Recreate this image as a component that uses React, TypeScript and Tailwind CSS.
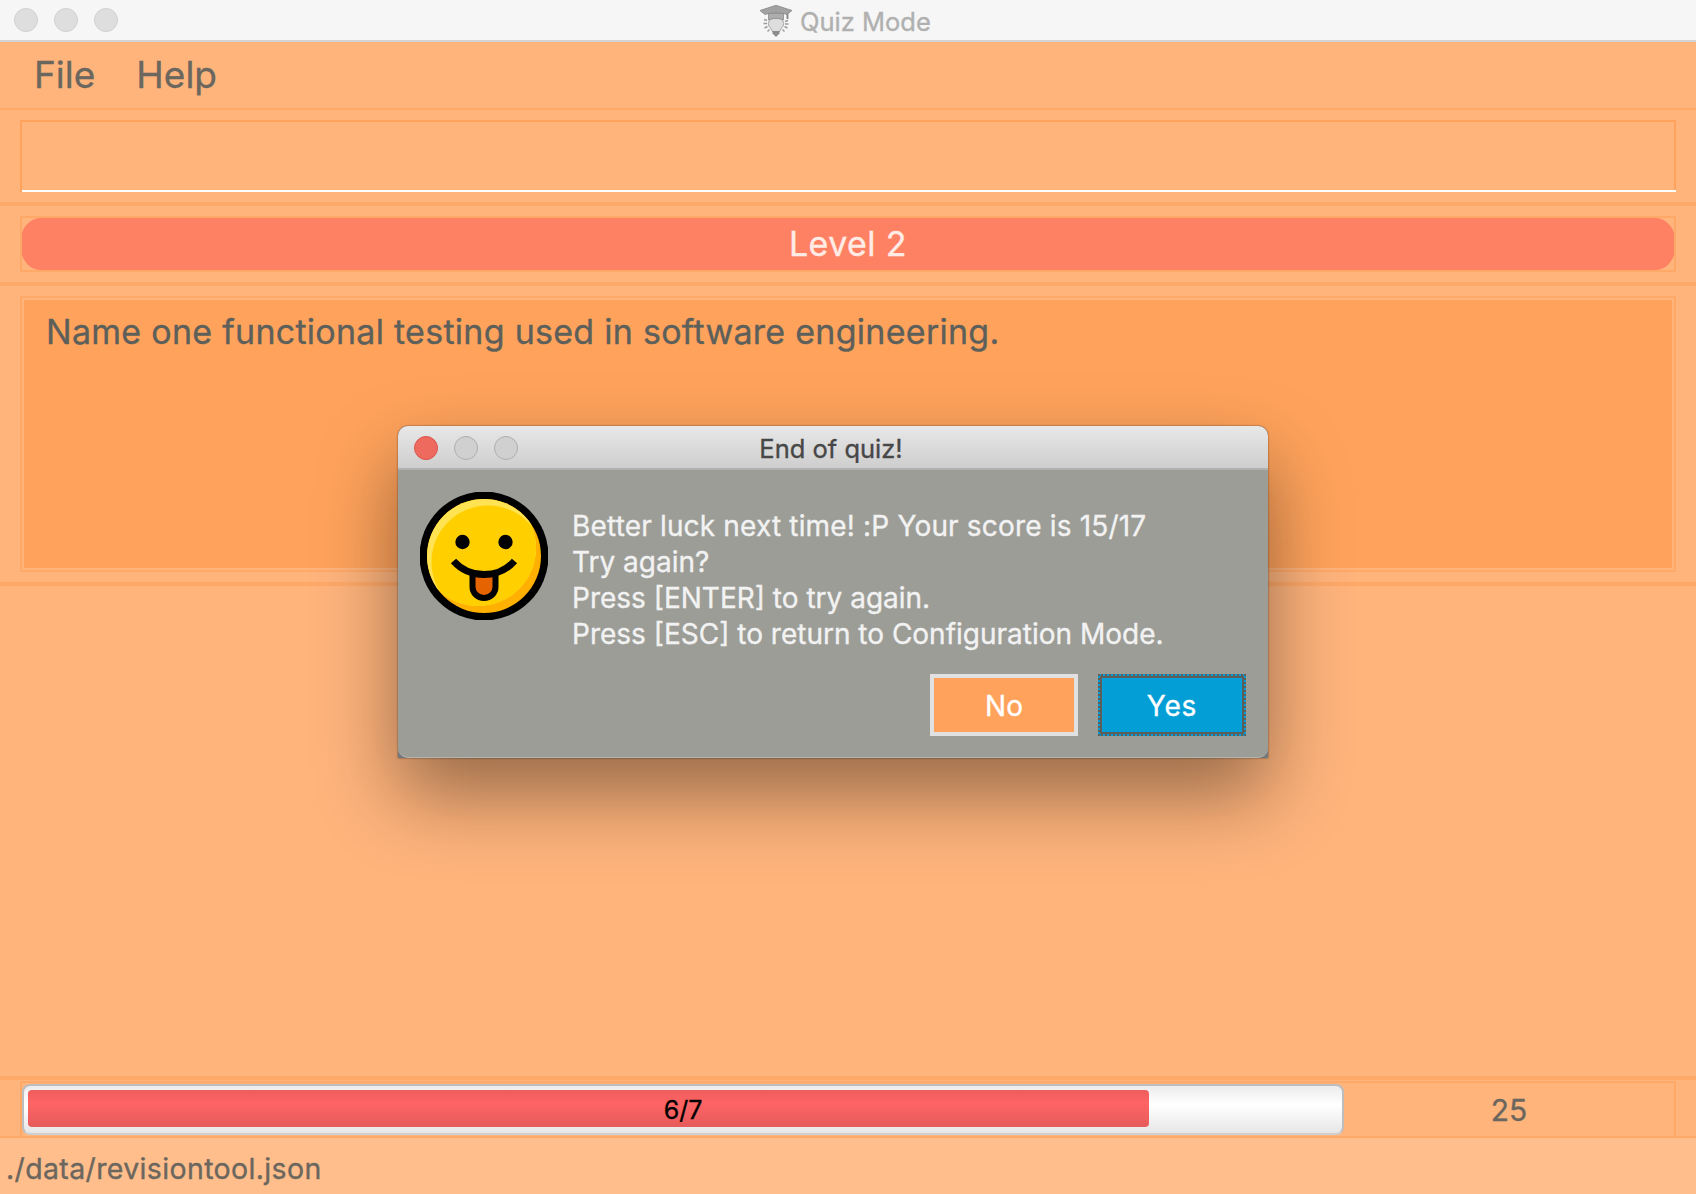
import React from "react";

type LightProps = { tone: "idle" | "dim" | "red" };

function Light({ tone }: LightProps) {
  const tones = {
    idle: "bg-[#dedede] border-[#d0d0d0]",
    dim: "bg-[#d0d0d0] border-[#adadad]",
    red: "bg-[#ee6a5f] border-[#d9544b]",
  };
  return <span className={`block size-6 rounded-full border ${tones[tone]}`} />;
}

function GraduateBulb() {
  return (
    <svg className="block h-8 w-8" viewBox="0 0 32 32">
      <path d="M8.300 18.500a7.800 7.800 0 0 1 15.400 0c0 3.500-3.200 4.500-4 8h-7.400c-.8-3.500-4-4.500-4-8z" fill="#dedede" stroke="#a2a2a2" strokeWidth="1" />
      <path d="M12.500 26h7v2.500l-2 2-1.500 1.500-1.500-1.500-2-2z" fill="#8c8c8c" />
      <path d="M8.500 8h15v7c-4-2-11-2-15 0z" fill="#adadad" stroke="#8c8c8c" strokeWidth=".8" />
      <path d="M0 5.500 16 .3l16 5.200-5 4c-6-2-16-2-22 0z" fill="#a2a2a2" stroke="#868686" strokeWidth=".8" />
      <path d="M27.500 8.500v5.500" stroke="#8c8c8c" strokeWidth="2" />
      <path d="M4 14.500l3 1M3.500 18.500h3.500M4.500 23l3-1.500M7.500 26.500l2-2M28 15.500l-3 1M28.500 19H25M27.500 23l-3-1.500M24.500 26.500l-2-2" stroke="#9b9b9b" strokeWidth="1.400" fill="none" />
    </svg>
  );
}

function TongueFace() {
  return (
    <svg className="block size-32 shrink-0" viewBox="0 0 128 128">
      <defs>
        <clipPath id="face"><circle cx="64" cy="64" r="57" /></clipPath>
        <clipPath id="lit"><circle cx="58" cy="56" r="58" /></clipPath>
      </defs>
      <circle cx="64" cy="64" r="64.500" fill="#000" />
      <circle cx="64" cy="64" r="57" fill="#ffb000" />
      <g clipPath="url(#face)">
        <g clipPath="url(#lit)">
          <rect width="128" height="128" fill="#ffe352" />
          <circle cx="68" cy="70" r="56.500" fill="#ffcf00" />
        </g>
      </g>
      <circle cx="42.500" cy="50" r="7.200" />
      <circle cx="85.500" cy="50" r="7.200" />
      <path d="M52.500 82v13a11.500 11 0 0 0 23 0V82z" fill="#e56300" stroke="#000" strokeWidth="6" />
      <path d="M33.500 69c16 18 45 18 61 0" fill="none" stroke="#000" strokeWidth="7" />
    </svg>
  );
}

function Rule() {
  return <div className="h-1 shrink-0 bg-[#ffa968]" />;
}

function Dialog() {
  return (
    <div className="absolute left-[398px] top-[426px] h-[332px] w-[870px] rounded-t-[10px] bg-[#74787a] shadow-[0_0_2px_rgba(0,0,0,0.6),0_36px_80px_rgba(0,0,0,0.42)]">
      <div className="flex h-full flex-col overflow-hidden rounded-[10px] border-b border-[#b3b3af] bg-[#9c9d97]">
        <div className="relative flex h-11 shrink-0 items-center gap-4 border-b-2 border-[#b1b1b1] bg-gradient-to-b from-[#e8e8e8] to-[#cecece] pl-4 pt-0.5">
          <Light tone="red" />
          <Light tone="dim" />
          <Light tone="dim" />
          <div className="absolute inset-x-0 top-[7px] pr-1 text-center text-[25.5px] leading-[32px] text-[#474747]">End of quiz!</div>
        </div>
        <div className="flex gap-6 pl-[22px] pt-[22px]">
          <TongueFace />
          <div className="whitespace-nowrap pt-4 text-[28px] leading-9 text-[#f2f2f2]">
            <p className="tracking-[0.17px]">Better luck next time! :P Your score is 15/17</p>
            <p>Try again?</p>
            <p>Press [ENTER] to try again.</p>
            <p>Press [ESC] to return to Configuration Mode.</p>
          </div>
        </div>
        <div className="mt-[22px] flex justify-end gap-5 pr-[22px] text-[28px] text-white">
          <button className="h-[62px] w-[148px] border-4 border-[#e1e1e1] bg-[#ffa35c] pt-0.5">No</button>
          <button className="h-[62px] w-[148px] border-2 border-dotted border-[#5b5e5b] bg-[#039ed6] tracking-[0.8px]">
            <span className="flex h-full items-center justify-center border-2 border-[#5b5e5b] pt-0.5">Yes</span>
          </button>
        </div>
      </div>
    </div>
  );
}

export default function App() {
  return (
    <div className="relative flex h-[1194px] w-[1696px] flex-col overflow-hidden bg-[#ffb47c] font-['Inter',sans-serif] text-[#6b665e] [-webkit-text-stroke:0.35px]">
      <header className="relative flex h-[42px] shrink-0 items-center gap-4 border-b-2 border-[#d3d3d3] bg-[#f6f6f6] pl-[14px]">
        <Light tone="idle" />
        <Light tone="idle" />
        <Light tone="idle" />
        <div className="absolute left-[760px] top-1 flex items-center gap-2 text-[25.5px] leading-8 text-[#b0b0b0]">
          <GraduateBulb />
          <span className="pt-0.5">Quiz Mode</span>
        </div>
      </header>
      <nav className="flex h-[68px] shrink-0 gap-[41px] border-b-2 border-[#ffa968] pl-[34px] text-[37px] leading-[66px]">
        <span>File</span>
        <span>Help</span>
      </nav>
      <div className="mx-5 mb-[10px] mt-[10px] h-[72px] shrink-0 border-2 border-b-0 border-[#ffa35c]">
        <div className="-mr-0.5 h-[70px] border-b-2 border-white" />
      </div>
      <Rule />
      <div className="mx-5 my-[10px] h-14 shrink-0 overflow-hidden border-2 border-[#ffa968]">
        <div className="-mx-0.5 h-[52px] rounded-[20px/26px] bg-[#ff8163] text-center text-[34px] leading-[52px] tracking-[0.4px] text-[#ffece6]">Level 2</div>
      </div>
      <Rule />
      <div className="mx-5 my-[10px] h-[276px] shrink-0 border-2 border-[#ffa968] p-0.5">
        <div className="h-full bg-[#ffa35c] pl-[22px] pt-3 text-[34px] leading-[40px] tracking-[0.27px] text-[#5d5f5a]">
          <span className="whitespace-nowrap">Name one functional testing used in software engineering.</span>
        </div>
      </div>
      <Rule />
      <main className="grow" />
      <Rule />
      <div className="mx-5 mt-px flex h-[55px] shrink-0 border-2 border-b-0 border-[#ffa968]">
        <div className="relative mt-px h-[51px] w-[1322px] rounded-lg border-2 border-[#bdbdbd] border-b-[#cfcfcf] bg-gradient-to-b from-[#ececec] via-white via-40% to-[#e6e6e6]">
          <div className="ml-1 mt-1 h-[37px] w-[1121px] rounded bg-gradient-to-b from-[#ee5c5c] via-[#ff6464] via-35% to-[#e65b5b]" />
          <div className="absolute inset-0 text-center text-[25px] leading-[48px] text-black">6/7</div>
        </div>
        <div className="grow text-center text-[30px] leading-[54px]">25</div>
      </div>
      <footer className="h-[58px] shrink-0 border-t-2 border-[#ffa968] bg-[#ffbe8b] pl-[6px] text-[28.5px] leading-[62px] tracking-[0.36px]">./data/revisiontool.json</footer>
      <Dialog />
    </div>
  );
}
